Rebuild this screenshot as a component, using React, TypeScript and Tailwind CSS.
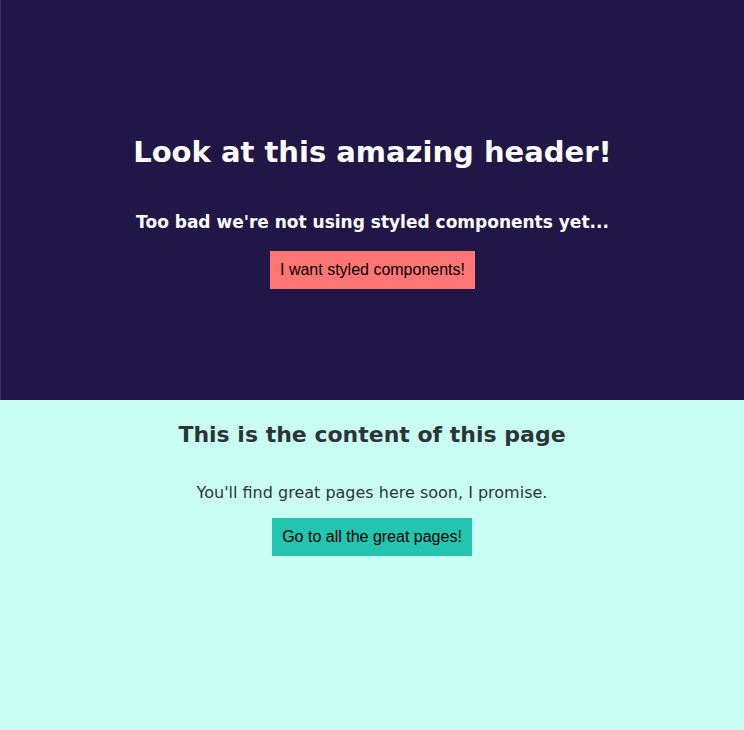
const App = () => {
  return (
    <div className="min-h-[730px] flex flex-col bg-[#c9fff3]" style={{ fontFamily: '"DejaVu Sans", sans-serif' }}>
      <header className="h-[400px] bg-[#201746] border-l border-[#3a3360] flex flex-col items-center pt-[132px]">
        <h1 className="text-[29px] leading-[40px] font-bold text-white">Look at this amazing header!</h1>
        <h2 className="mt-[38px] text-[17px] leading-[24px] font-bold text-white">
          Too bad we're not using styled components yet...
        </h2>
        <button
          className="mt-[17px] h-[38px] px-[10px] bg-[#ff7675] text-black text-[16px]"
          style={{ fontFamily: '"Liberation Sans", Arial, sans-serif' }}
        >
          I want styled components!
        </button>
      </header>
      <main className="flex flex-col items-center pt-[19px]">
        <h2 className="text-[22px] leading-[32px] font-bold text-[#2d3436]">This is the content of this page</h2>
        <p className="mt-[30px] text-[16px] leading-[24px] text-[#2d3436]">You'll find great pages here soon, I promise.</p>
        <button
          className="mt-[13px] h-[38px] px-[10px] bg-[#23c5b1] text-black text-[16px]"
          style={{ fontFamily: '"Liberation Sans", Arial, sans-serif' }}
        >
          Go to all the great pages!
        </button>
      </main>
    </div>
  );
};

export default App;
